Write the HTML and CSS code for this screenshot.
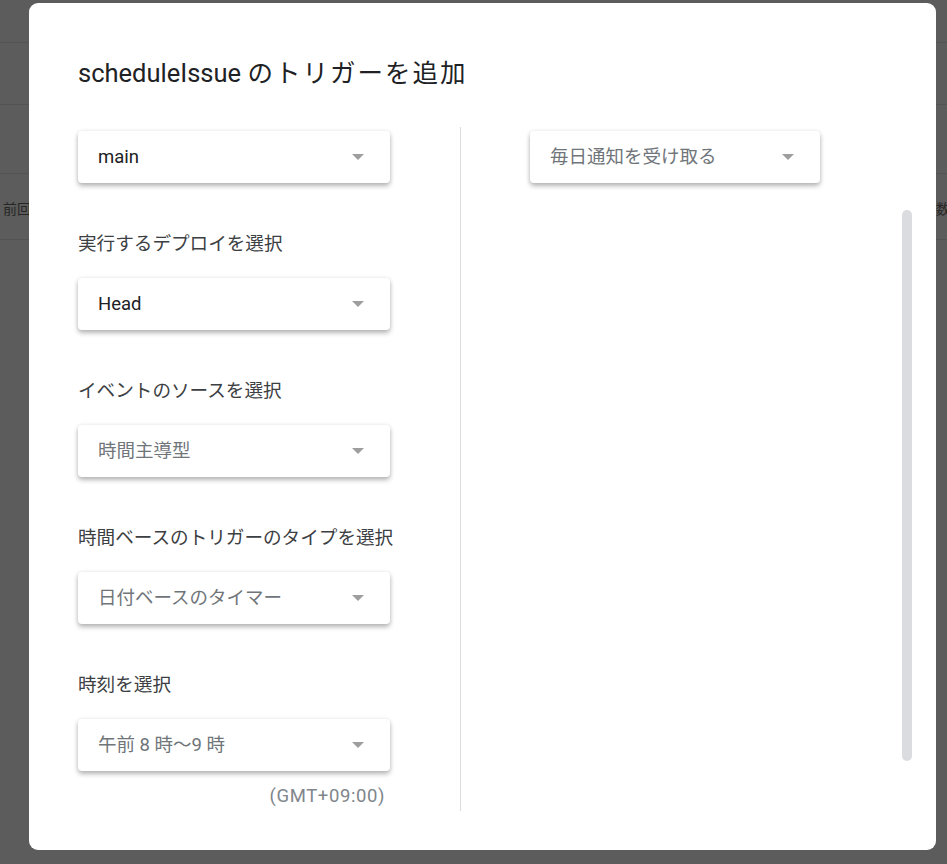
FILE: index.html
```html
<!DOCTYPE html>
<html lang="ja">
<head>
<meta charset="utf-8">
<title>トリガーを追加</title>
<link rel="stylesheet" href="styles.css">
</head>
<body>
<div class="page">
  <div class="row r1"></div>
  <div class="row r2"></div>
  <div class="row r3"></div>
  <div class="row r4"><span class="cell-l">前回</span><span class="cell-r">数</span></div>
</div>

<div class="dialog">
  <h1 class="title">scheduleIssue <span class="title-ja">のトリガーを追加</span></h1>
  <div class="body">
    <div class="col-left">
      <div class="select first"><span class="val dark">main</span><span class="arrow"></span></div>

      <div class="label">実行するデプロイを選択</div>
      <div class="select"><span class="val dark">Head</span><span class="arrow"></span></div>

      <div class="label">イベントのソースを選択</div>
      <div class="select"><span class="val">時間主導型</span><span class="arrow"></span></div>

      <div class="label">時間ベースのトリガーのタイプを選択</div>
      <div class="select"><span class="val">日付ベースのタイマー</span><span class="arrow"></span></div>

      <div class="label">時刻を選択</div>
      <div class="select"><span class="val">午前 8 時～9 時</span><span class="arrow"></span></div>
      <div class="tz">(GMT+09:00)</div>
    </div>
    <div class="col-right">
      <div class="right-content">
        <div class="select first narrow"><span class="val">毎日通知を受け取る</span><span class="arrow"></span></div>
      </div>
      <div class="scrollbar"></div>
    </div>
  </div>
</div>
</body>
</html>
```

FILE: styles.css
```css
* { box-sizing: border-box; }

html, body {
  margin: 0;
  padding: 0;
}

body {
  width: 947px;
  height: 864px;
  overflow: hidden;
  background: #5c5c5c;
  font-family: Roboto, "Noto Sans CJK JP", sans-serif;
  position: relative;
}

.page {
  display: flex;
  flex-direction: column;
}

.row {
  border-bottom: 1px solid #535353;
  position: relative;
}
.r1 { height: 43px; }
.r2 { height: 62px; }
.r3 { height: 69px; }
.r4 { height: 66px; }

.cell-l, .cell-r {
  position: absolute;
  top: 24px;
  font-size: 14px;
  color: #262626;
  font-family: "Noto Sans CJK JP", sans-serif;
}
.cell-l { left: 3px; }
.cell-r { left: 936px; }

.dialog {
  position: absolute;
  left: 29px;
  top: 3px;
  width: 907px;
  height: 847px;
  background: #ffffff;
  border-radius: 9px;
  padding: 55px 0 0 49px;
}

.title {
  margin: 0;
  font-size: 25.5px;
  line-height: 30px;
  font-weight: 400;
  color: #202124;
}

.title-ja {
  letter-spacing: 2px;
}

.body {
  display: flex;
  margin-top: 39px;
  height: 684px;
}

.col-left {
  width: 383px;
  border-right: 1px solid #dadce0;
  display: flex;
  flex-direction: column;
}

.select {
  width: 312px;
  height: 52px;
  border-radius: 4px;
  background: #fff;
  box-shadow: 0 3px 5px rgba(0, 0, 0, 0.28), 0 0 4px rgba(0, 0, 0, 0.08);
  display: flex;
  align-items: center;
  justify-content: space-between;
  padding: 0 26px 0 20px;
  margin-top: 24px;
  flex-shrink: 0;
}
.select.first { margin-top: 4px; }
.select.narrow { width: 290px; }

.val {
  font-size: 18.5px;
  color: #70757a;
  line-height: 24px;
}
.val.dark { color: #202124; }

.arrow {
  width: 0;
  height: 0;
  border-left: 6px solid transparent;
  border-right: 6px solid transparent;
  border-top: 6px solid #9e9e9e;
}

.label {
  margin-top: 47px;
  font-size: 18.6px;
  line-height: 24px;
  color: #3c4043;
  font-family: "Noto Sans CJK JP", sans-serif;
}

.tz {
  width: 312px;
  text-align: right;
  padding-right: 5px;
  margin-top: 15px;
  font-size: 18.5px;
  letter-spacing: 0.6px;
  line-height: 20px;
  color: #80868b;
}

.col-right {
  flex: 1;
  display: flex;
}

.right-content {
  flex: 1;
  padding-left: 69px;
}

.scrollbar {
  width: 10px;
  height: 551px;
  margin-top: 83px;
  margin-right: 24px;
  border-radius: 5px;
  background: #dadce0;
}
```
